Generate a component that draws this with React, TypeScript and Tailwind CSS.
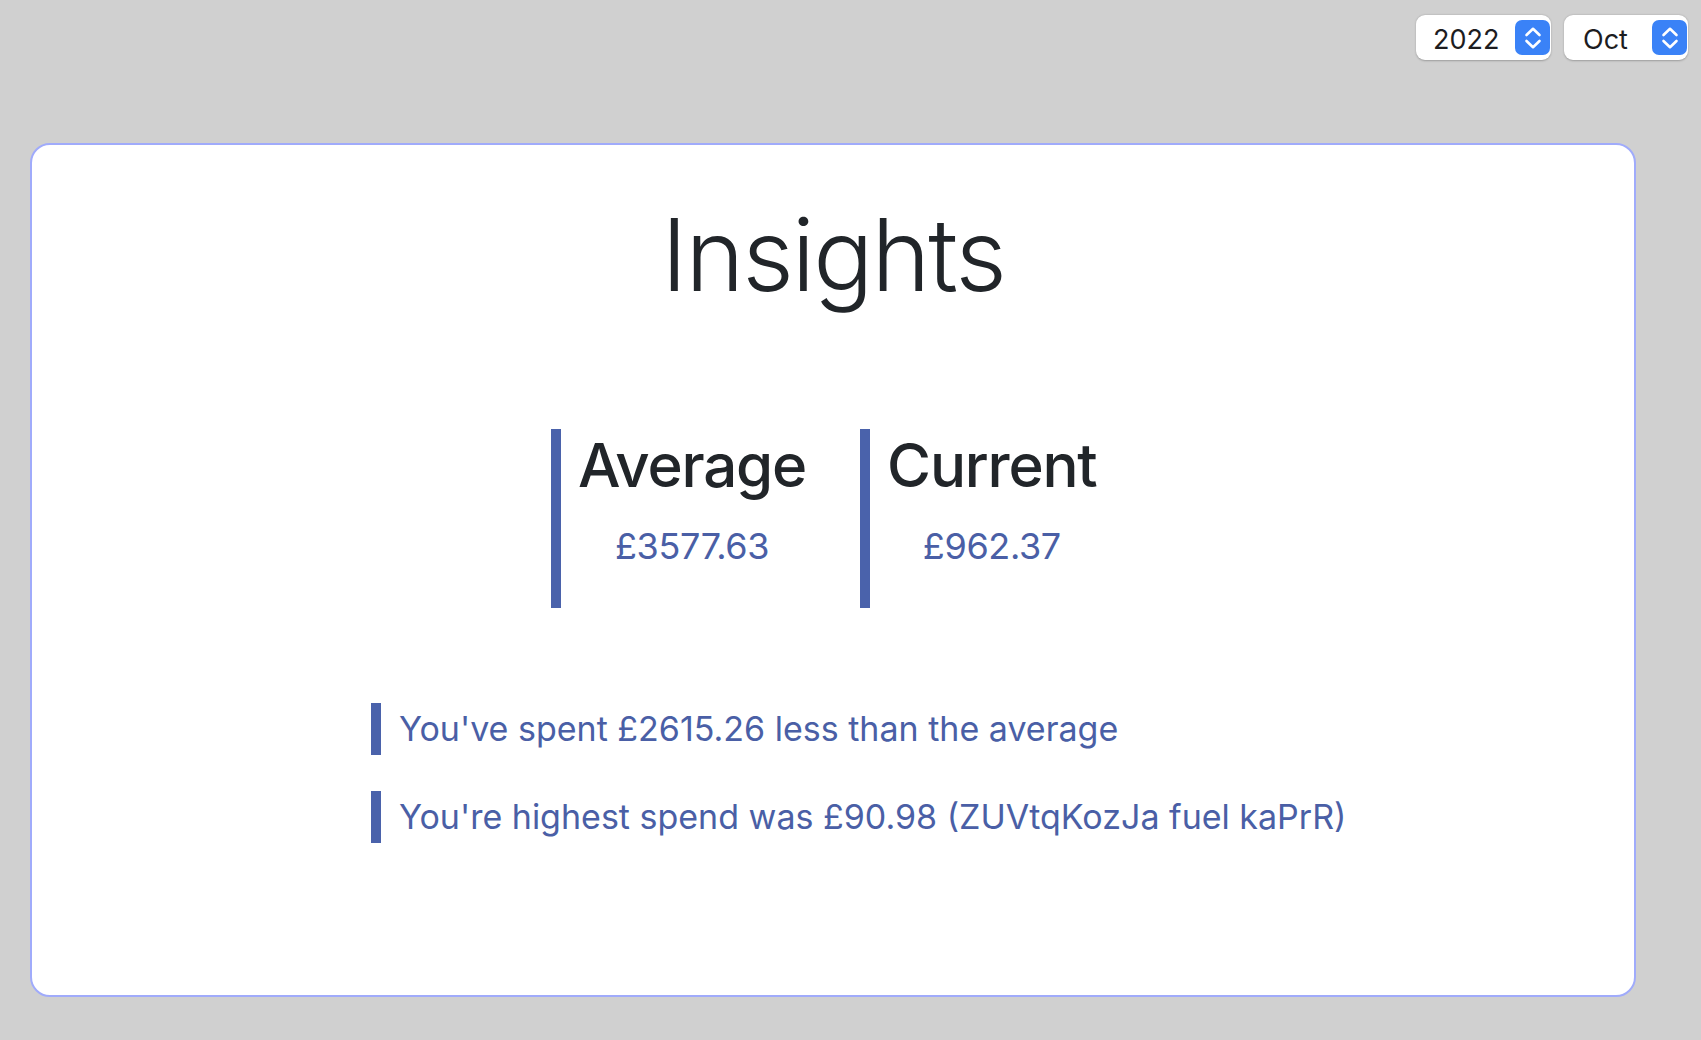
import React from 'react'

const Stepper = () => (
  <div className="flex h-[35px] w-[35px] items-center justify-center rounded-[7px] bg-[#3a82f7]">
    <svg width="20" height="28" viewBox="0 0 20 28" fill="none">
      <path d="M3.5 11 10 4.8 16.5 11" stroke="white" strokeWidth="2.6" strokeLinecap="round" strokeLinejoin="round" />
      <path d="M3.5 17 10 23.2 16.5 17" stroke="white" strokeWidth="2.6" strokeLinecap="round" strokeLinejoin="round" />
    </svg>
  </div>
)

const Picker = ({ value, width, pad }: { value: string; width: string; pad: string }) => (
  <div
    className={`flex h-[45px] items-center justify-between rounded-[9px] bg-white pr-[1px] shadow-[0_0.5px_2px_rgba(0,0,0,0.25)] ${width} ${pad}`}
  >
    <span className="pt-[3px] text-[27px] leading-none text-[#1d1d1f]">{value}</span>
    <Stepper />
  </div>
)

const Stat = ({ label, amount }: { label: string; amount: string }) => (
  <div className="flex h-[179px] border-l-[10px] border-[#4a62ab] pl-[17px]">
    <div className="flex flex-col items-center">
      <h2 className="text-[60px] leading-[1.2] font-medium tracking-[-0.02em] text-[#212529]">
        {label}
      </h2>
      <p className="mt-[24px] text-[36px] leading-[1.2] tracking-[-0.01em] text-[#4a5fa6]">{amount}</p>
    </div>
  </div>
)

const Insight = ({ text }: { text: string }) => (
  <div className="flex h-[52px] items-center border-l-[10px] border-[#4a62ab] pl-[18px]">
    <span className="text-[34px] leading-[52px] text-[#4a5fa6]">{text}</span>
  </div>
)

const App = () => {
  return (
    <div className="min-h-screen w-full bg-[#d0d0d0] pb-[43px] font-['Inter',sans-serif]">
      <div className="flex justify-end gap-[13px] pt-[15px] pr-[13px]">
        <Picker value="2022" width="w-[135px]" pad="pl-[17px]" />
        <Picker value="Oct" width="w-[124px]" pad="pl-[19px]" />
      </div>

      <div className="mt-[83px] ml-[30px] h-[854px] w-[1606px] rounded-[20px] border-2 border-[#a0abfb] bg-white">
        <h1 className="pt-[60px] text-center text-[100px] leading-none font-light tracking-[-0.02em] text-[#212529]">
          Insights
        </h1>

        <div className="mt-[124px] flex gap-[54px] pl-[519px]">
          <Stat label="Average" amount="£3577.63" />
          <Stat label="Current" amount="£962.37" />
        </div>

        <div className="mt-[95px] flex flex-col gap-[36px] pl-[339px]">
          <Insight text="You've spent £2615.26 less than the average" />
          <Insight text="You're highest spend was £90.98 (ZUVtqKozJa fuel kaPrR)" />
        </div>
      </div>
    </div>
  )
}

export default App
